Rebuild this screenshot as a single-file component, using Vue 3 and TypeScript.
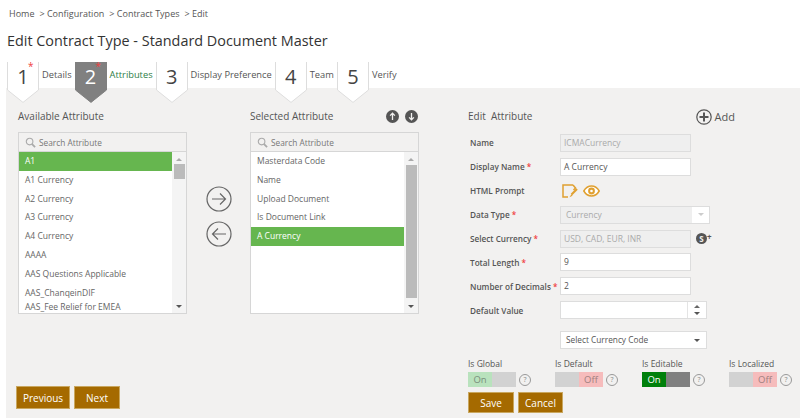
<script setup lang="ts">
const crumbs = ["Configuration", "Contract Types", "Edit"];

const steps = [
  { no: 1, label: "Details", required: true, active: false },
  { no: 2, label: "Attributes", required: true, active: true },
  { no: 3, label: "Display Preference", required: false, active: false },
  { no: 4, label: "Team", required: false, active: false },
  { no: 5, label: "Verify", required: false, active: false },
];

const available = [
  "A1",
  "A1 Currency",
  "A2 Currency",
  "A3 Currency",
  "A4 Currency",
  "AAAA",
  "AAS Questions Applicable",
  "AAS_ChanqeinDIF",
];

const selected = ["Masterdata Code", "Name", "Upload Document", "Is Document Link", "A Currency"];

const toggles = [
  { label: "Is Global", on: true, editable: false },
  { label: "Is Default", on: false, editable: false },
  { label: "Is Editable", on: true, editable: true },
  { label: "Is Localized", on: false, editable: false },
];
</script>

<template>
  <div class="page">
    <div class="crumbs">
      <span>Home</span>
      <span v-for="c in crumbs" :key="c" class="crumb">&gt; {{ c }}</span>
    </div>
    <h1>Edit Contract Type - Standard Document Master</h1>

    <div class="steps">
      <div v-for="s in steps" :key="s.no" class="step" :class="{ active: s.active }">
        <div class="step-num">
          <svg class="step-shape" viewBox="0 0 32 41" width="32" height="41">
            <path d="M.5 0V28L16 40.4 31.5 28V0" />
          </svg>
          <span class="digit">{{ s.no }}</span>
          <span v-if="s.required" class="step-star">*</span>
        </div>
        <span class="step-label">{{ s.label }}</span>
      </div>
    </div>

    <div class="panel">
      <div class="left">
        <div class="lists">
          <div class="list-col">
            <div class="col-title">Available Attribute</div>
            <div class="list-box">
              <div class="search">
                <svg viewBox="0 0 12 12" width="11" height="11">
                  <circle cx="5" cy="5" r="3.6" />
                  <path d="M7.7 7.7 11 11" class="handle" />
                </svg>
                <span>Search Attribute</span>
              </div>
              <div class="list-body">
                <div class="items">
                  <div v-for="(a, i) in available" :key="a" class="item" :class="{ picked: i === 0 }">{{ a }}</div>
                  <div class="item last">AAS_Fee Relief for EMEA</div>
                </div>
                <div class="scroll">
                  <i class="up"></i>
                  <div class="track"><div class="thumb small"></div></div>
                  <i class="down"></i>
                </div>
              </div>
            </div>
          </div>

          <div class="arrows">
            <svg viewBox="0 0 26 26" width="26" height="26">
              <circle cx="13" cy="13" r="12" />
              <path d="M6 13H19.5M14 7.5 19.5 13 14 18.5" />
            </svg>
            <svg viewBox="0 0 26 26" width="26" height="26">
              <circle cx="13" cy="13" r="12" />
              <path d="M20 13H6.5M12 7.5 6.5 13 12 18.5" />
            </svg>
          </div>

          <div class="list-col">
            <div class="col-title with-icons">
              <span>Selected Attribute</span>
              <div class="order">
                <svg viewBox="0 0 12 12" width="13" height="13">
                  <circle cx="6" cy="6" r="6" />
                  <path d="M6 9.3V3.2M3.8 5.2 6 3l2.2 2.2" />
                </svg>
                <svg viewBox="0 0 12 12" width="13" height="13">
                  <circle cx="6" cy="6" r="6" />
                  <path d="M6 2.7V8.8M3.8 6.8 6 9l2.2-2.2" />
                </svg>
              </div>
            </div>
            <div class="list-box">
              <div class="search">
                <svg viewBox="0 0 12 12" width="11" height="11">
                  <circle cx="5" cy="5" r="3.6" />
                  <path d="M7.7 7.7 11 11" class="handle" />
                </svg>
                <span>Search Attribute</span>
              </div>
              <div class="list-body">
                <div class="items">
                  <div v-for="(a, i) in selected" :key="a" class="item" :class="{ picked: i === 4 }">{{ a }}</div>
                </div>
                <div class="scroll">
                  <i class="up"></i>
                  <div class="track"><div class="thumb large"></div></div>
                  <i class="down"></i>
                </div>
              </div>
            </div>
          </div>
        </div>

        <div class="nav-btns">
          <button type="button" class="btn">Previous</button>
          <button type="button" class="btn">Next</button>
        </div>
      </div>

      <div class="edit">
        <div class="edit-head">
          <span class="col-title">Edit&nbsp; Attribute</span>
          <div class="add">
            <svg viewBox="0 0 16 16" width="16" height="16">
              <circle cx="8" cy="8" r="7.2" />
              <path d="M8 3.5V12.5M3.5 8H12.5" class="plus" />
            </svg>
            <span>Add</span>
          </div>
        </div>

        <div class="row">
          <label>Name</label>
          <div class="field disabled">ICMACurrency</div>
        </div>
        <div class="row">
          <label>Display Name <em>*</em></label>
          <div class="field">A Currency</div>
        </div>
        <div class="row">
          <label>HTML Prompt</label>
          <div class="prompt-icons">
            <svg viewBox="0 0 16 14" width="16" height="14">
              <path d="M11 1H1V13H6" class="edit-frame" />
              <path d="M11 1 13.5 4 11.5 6" class="edit-frame" />
              <path d="M15 5 9.5 10.5" class="edit-pen" />
              <path d="M9.5 10 7.5 13.3 10.5 11.8Z" class="edit-tip" />
            </svg>
            <svg viewBox="0 0 17 12" width="17" height="12">
              <path d="M.8 6C3 2.2 5.5 1 8.5 1S14 2.2 16.2 6C14 9.8 11.5 11 8.5 11S3 9.8 .8 6Z" class="eye" />
              <circle cx="8.5" cy="6" r="3.4" class="iris" />
              <circle cx="8.5" cy="6" r="1.3" class="pupil" />
            </svg>
          </div>
        </div>
        <div class="row">
          <label>Data Type <em>*</em></label>
          <div class="field disabled select-disabled">
            <span>Currency</span>
            <div class="select-caret"><i class="down faint"></i></div>
          </div>
        </div>
        <div class="row">
          <label>Select Currency <em>*</em></label>
          <div class="field disabled">USD, CAD, EUR, INR</div>
          <div class="s-plus"><span class="s-dot">S</span><span class="s-add">+</span></div>
        </div>
        <div class="row">
          <label>Total Length <em>*</em></label>
          <div class="field">9</div>
        </div>
        <div class="row">
          <label>Number of Decimals <em>*</em></label>
          <div class="field">2</div>
        </div>
        <div class="row">
          <label>Default Value</label>
          <div class="field spinner-field">
            <div class="spinner"><i class="up"></i><i class="down"></i></div>
          </div>
        </div>
        <div class="row code-row">
          <label></label>
          <div class="field code-select">
            <span>Select Currency Code</span>
            <i class="down"></i>
          </div>
        </div>

        <div class="toggles">
          <div v-for="t in toggles" :key="t.label" class="toggle-col">
            <div class="toggle-label">{{ t.label }}</div>
            <div class="toggle-line">
              <div class="toggle" :class="{ strong: t.editable }">
                <template v-if="t.on">
                  <span class="t-on">On</span>
                  <span class="t-blank"></span>
                </template>
                <template v-else>
                  <span class="t-blank"></span>
                  <span class="t-off">Off</span>
                </template>
              </div>
              <span class="help">?</span>
            </div>
          </div>
        </div>

        <div class="form-btns">
          <button type="button" class="btn save">Save</button>
          <button type="button" class="btn cancel">Cancel</button>
        </div>
      </div>
    </div>
  </div>
</template>

<style>
html,
body {
  margin: 0;
  background: #fff;
}
</style>

<style scoped>
.page {
  width: 800px;
  height: 418px;
  overflow: hidden;
  font-family: "Open Sans", "Noto Sans", sans-serif;
  color: #555;
  background: #fff;
}

.crumbs {
  display: flex;
  padding: 7px 0 0 9px;
  height: 14px;
  line-height: 14px;
  font-size: 9px;
}

.crumb {
  margin-left: 5px;
}

h1 {
  margin: 8px 0 0 7px;
  height: 24px;
  line-height: 24px;
  font-size: 14.4px;
  font-weight: 400;
  color: #333;
}

.steps {
  display: flex;
  position: relative;
  z-index: 1;
  margin: 9px 0 -15px 7px;
  height: 41px;
}

.step {
  display: flex;
  align-items: flex-start;
  margin-right: 3px;
}

.step-num {
  position: relative;
  width: 32px;
  height: 41px;
  display: flex;
  justify-content: center;
  font-size: 20px;
  line-height: 30px;
  color: #444;
}

.step-shape {
  position: absolute;
  left: 0;
  top: 0;
}

.step-shape path {
  fill: #fff;
  stroke: #ddd;
}

.active .step-shape path {
  fill: #808080;
  stroke: #808080;
}

.digit {
  position: relative;
}

.active .digit {
  color: #fff;
}

.step-star {
  position: absolute;
  top: -3px;
  left: 21px;
  font-size: 10px;
  line-height: 14px;
  color: #f04040;
}

.step-label {
  margin: 5px 0 0 3px;
  font-size: 9.3px;
  line-height: 16px;
}

.active .step-label {
  color: #2e7d46;
}

.panel {
  display: flex;
  margin-left: 6px;
  height: 330px;
  padding: 0 0 0 12px;
  box-sizing: border-box;
  background: #f2f1f0;
}

.left {
  width: 450px;
  flex-shrink: 0;
  display: flex;
  flex-direction: column;
}

.lists {
  display: flex;
  padding-top: 20px;
}

.list-col {
  width: 169px;
}

.col-title {
  height: 17px;
  line-height: 17px;
  font-size: 10px;
  color: #555;
}

.with-icons {
  display: flex;
  justify-content: space-between;
  padding-right: 1px;
}

.order {
  display: flex;
  gap: 6px;
  align-items: center;
}

.order circle {
  fill: #555;
}

.order path {
  fill: none;
  stroke: #f2f1f0;
  stroke-width: 1.2;
}

.list-box {
  margin-top: 7px;
  border: 1px solid #d6d6d6;
  background: #fff;
  box-sizing: border-box;
  height: 182px;
  display: flex;
  flex-direction: column;
}

.search {
  display: flex;
  align-items: center;
  gap: 3px;
  height: 18px;
  padding-left: 6px;
  background: #f2f1f0;
  border-bottom: 1px solid #d6d6d6;
  font-size: 8.3px;
  color: #777;
  flex-shrink: 0;
}

.search circle {
  fill: none;
  stroke: #aaa;
  stroke-width: 1.2;
}

.search .handle {
  fill: none;
  stroke: #aaa;
  stroke-width: 2;
}

.list-body {
  flex: 1;
  display: flex;
  min-height: 0;
}

.items {
  flex: 1;
  overflow: hidden;
}

.item {
  height: 18.8px;
  line-height: 18.8px;
  padding-left: 6px;
  font-size: 8.5px;
  color: #666;
}

.item.picked {
  background: #66b64f;
  color: #fff;
}

.item.last {
  height: 13px;
  line-height: 10px;
}

.scroll {
  width: 14px;
  display: flex;
  flex-direction: column;
  align-items: center;
  padding: 6px 0 5px;
  box-sizing: border-box;
  background: #f4f4f4;
}

.track {
  flex: 1;
  width: 11px;
  margin: 2px 0 5px;
}

.thumb {
  background: #bbb;
}

.thumb.small {
  height: 15px;
  margin-top: 1px;
}

.thumb.large {
  height: 133px;
  margin-top: 2px;
}

i.up {
  display: block;
  width: 0;
  height: 0;
  border-left: 3px solid transparent;
  border-right: 3px solid transparent;
  border-bottom: 3px solid #aaa;
}

i.down {
  display: block;
  width: 0;
  height: 0;
  border-left: 3px solid transparent;
  border-right: 3px solid transparent;
  border-top: 3px solid #555;
}

i.faint {
  border-top-color: #ccc;
}

.arrows {
  width: 63px;
  display: flex;
  flex-direction: column;
  align-items: center;
  gap: 9px;
  padding-top: 78px;
  box-sizing: border-box;
}

.arrows circle,
.arrows path {
  fill: none;
  stroke: #666;
  stroke-width: 1.2;
}

.nav-btns {
  display: flex;
  gap: 4px;
  margin: 72px 0 0 -2px;
}

.btn {
  height: 23px;
  padding: 0;
  border: 1px solid #c9a75f;
  background: #a56a00;
  color: #fff;
  font-family: inherit;
  font-size: 10px;
}

.nav-btns .btn:first-child {
  width: 54px;
}

.nav-btns .btn:last-child {
  width: 46px;
}

.edit {
  flex: 1;
  padding-top: 19px;
  font-size: 9px;
}

.edit-head {
  display: flex;
  justify-content: space-between;
  align-items: center;
  width: 267px;
  height: 19px;
  margin-bottom: 5px;
}

.add {
  display: flex;
  align-items: center;
  gap: 3px;
  font-size: 11px;
}

.add circle {
  fill: none;
  stroke: #555;
  stroke-width: 1.2;
}

.add .plus {
  stroke: #555;
  stroke-width: 2;
}

.row {
  display: flex;
  align-items: center;
  height: 23.9px;
  padding-left: 2px;
}

label {
  width: 90px;
  flex-shrink: 0;
  font-size: 8.2px;
  font-weight: 600;
  color: #555;
  white-space: nowrap;
}

label em {
  color: #f04040;
  font-style: normal;
}

.field {
  width: 131px;
  height: 18px;
  line-height: 16px;
  padding-left: 3px;
  box-sizing: border-box;
  border: 1px solid #ddd;
  background: #fff;
  font-size: 8.5px;
  color: #555;
}

.field.disabled {
  background: #efefef;
  color: #aaa;
}

.select-disabled {
  width: 150px;
  padding-left: 5px;
  display: flex;
  justify-content: space-between;
}

.select-caret {
  width: 17px;
  background: #fff;
  display: flex;
  align-items: center;
  justify-content: center;
}

.prompt-icons {
  display: flex;
  align-items: center;
  gap: 5px;
  padding-left: 2px;
}

.edit-frame {
  fill: none;
  stroke: #e0a030;
  stroke-width: 1.5;
}

.edit-pen {
  stroke: #e0a030;
  stroke-width: 2.2;
}

.edit-tip {
  fill: #e0a030;
}

.eye {
  fill: #fff;
  stroke: #e0a030;
  stroke-width: 1.5;
}

.iris {
  fill: #e0a030;
}

.pupil {
  fill: #fff;
}

.s-plus {
  display: flex;
  align-items: flex-start;
  margin-left: 5px;
  color: #555;
}

.s-dot {
  width: 11px;
  height: 11px;
  border-radius: 50%;
  background: #555;
  color: #f2f1f0;
  font-size: 8px;
  font-weight: 700;
  line-height: 11px;
  text-align: center;
}

.s-add {
  font-size: 8px;
  font-weight: 700;
  line-height: 7px;
}

.spinner-field {
  width: 147px;
  position: relative;
}

.spinner {
  position: absolute;
  right: 0;
  top: 0;
  bottom: 0;
  width: 18px;
  border-left: 1px solid #e4e4e4;
  display: flex;
  flex-direction: column;
  align-items: center;
  justify-content: center;
  gap: 4px;
}

.spinner i.up {
  border-bottom-color: #666;
}

.code-row {
  margin-top: 6px;
}

.code-select {
  width: 147px;
  padding: 0 6px 0 5px;
  display: flex;
  justify-content: space-between;
  align-items: center;
  font-size: 8.3px;
}

.toggles {
  display: flex;
  margin-top: 6px;
}

.toggle-col {
  width: 87px;
}

.toggle-label {
  font-size: 8.5px;
  line-height: 12px;
  color: #555;
}

.toggle-line {
  display: flex;
  align-items: center;
  gap: 3px;
  margin-top: 2px;
}

.toggle {
  display: flex;
  width: 48px;
  height: 15px;
  background: #d2d2d2;
  font-size: 9.5px;
  line-height: 15px;
  text-align: center;
}

.toggle span {
  flex: 1;
}

.t-on {
  background: #b9e2bd;
  color: #7a8f7c;
}

.t-off {
  background: #f6bcbc;
  color: #a08080;
}

.strong .t-on {
  background: #00800b;
  color: #fff;
}

.strong .t-blank {
  background: #808080;
}

.help {
  width: 10px;
  height: 10px;
  line-height: 10px;
  border: 1px solid #999;
  border-radius: 50%;
  font-size: 7px;
  text-align: center;
  color: #888;
}

.form-btns {
  display: flex;
  gap: 4px;
  margin-top: 5px;
}

.btn.save {
  width: 46px;
  height: 21px;
}

.btn.cancel {
  width: 45px;
  height: 21px;
}
</style>
